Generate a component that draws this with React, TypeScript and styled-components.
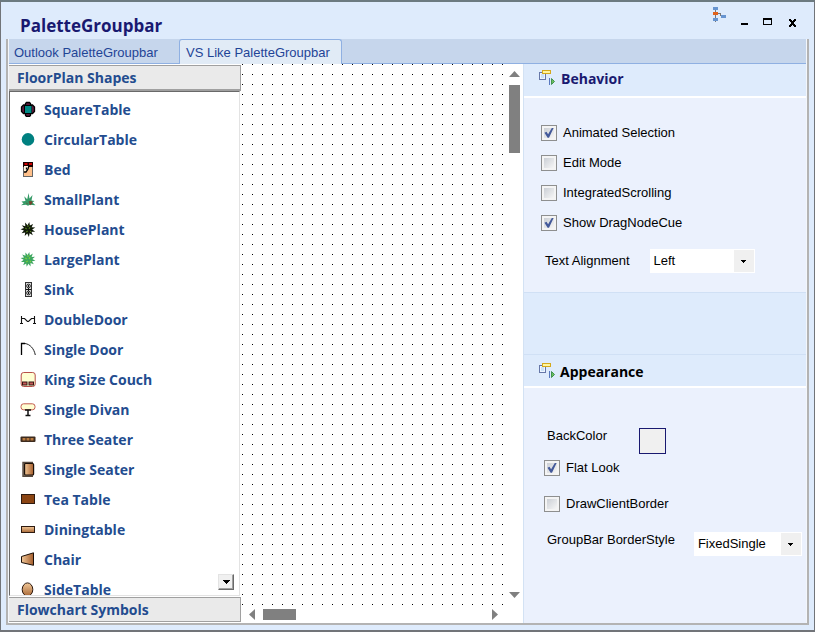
import React, { useState } from "react";
import styled, { createGlobalStyle } from "styled-components";

const GlobalStyle = createGlobalStyle`
  * { box-sizing: border-box; }
  body { margin: 0; background: #deebfc; }
  button, select, input { font: inherit; }
`;

const ui = '"Liberation Sans", Arial, sans-serif';
const heading = '"Open Sans", "Noto Sans", sans-serif';

const Window = styled.div`
  display: flex;
  flex-direction: column;
  height: 100vh;
  min-height: 400px;
  padding: 0 5px 5px 5px;
  background: #deebfc;
  border: 1px solid #717479;
  border-top: 2px solid #6c7a80;
  border-bottom-width: 2px;
  font: 13px/16px ${ui};
  color: #000;
`;

const TitleBar = styled.header`
  display: flex;
  align-items: flex-start;
  height: 37px;
  flex: none;
  padding: 0 11px 0 14px;
`;

const Title = styled.h1`
  flex: 1;
  margin: 0;
  padding-top: 12px;
  font: 700 17px/24px ${heading};
  color: #191970;
`;

const WindowButtons = styled.div`
  display: flex;
  gap: 8px;
  padding-top: 4px;
`;

const WindowButton = styled.button`
  width: 16px;
  height: 28px;
  padding: 0;
  border: 0;
  background: none;
  svg { display: block; }
`;

const Frame = styled.div`
  display: flex;
  flex-direction: column;
  flex: 1;
  min-height: 0;
  border: 2px solid #b3b3b3;
  border-top: 0;
  padding: 0 1px;
  background: #f3f6fb;
`;

const TabStrip = styled.div`
  display: flex;
  height: 25px;
  flex: none;
  background: #c6d6ec;
  box-shadow: inset 0 -1px #8fb0e2;
`;

const Tab = styled.button<{ $active?: boolean }>`
  padding: 2px 6px 0;
  width: ${(p) => (p.$active ? "163px" : "170px")};
  text-align: left;
  white-space: nowrap;
  color: #1f4496;
  background: ${(p) => (p.$active ? "#e1ebf6" : "transparent")};
  border: 1px solid ${(p) => (p.$active ? "#8fb0e2" : "transparent")};
  border-bottom: 0;
  border-radius: 3px 3px 0 0;
  padding-left: ${(p) => (p.$active ? "6px" : "4px")};
`;

const Content = styled.main`
  display: grid;
  grid-template-columns: 232px minmax(0, 1fr) 283px;
  flex: 1;
  min-height: 0;
`;

const GroupBar = styled.section`
  display: flex;
  flex-direction: column;
  min-height: 0;
  padding: 1px 0;
  background: #fff;
`;

const GroupHeader = styled.button<{ $open?: boolean }>`
  flex: none;
  height: ${(p) => (p.$open ? "26px" : "25px")};
  padding: 0 8px;
  text-align: left;
  font: 700 14px/22px ${heading};
  color: #234c8f;
  background: #eaeaea;
  border: 1px solid #a0a0a0;
  border-left: 0;
  border-bottom-width: ${(p) => (p.$open ? "2px" : "1px")};
`;

const ListArea = styled.div`
  display: grid;
  flex: 1;
  min-height: 0;
  margin: 0 1px 1px 0;
  overflow: hidden;
  border: 1px solid #e3e3e3;
  border-left-color: #696969;
  border-top-color: #696969;
  > * { grid-area: 1 / 1; }
`;

const ShapeList = styled.ul`
  margin: 0;
  padding: 2px 0 0;
  height: 0;
  list-style: none;
`;

const ShapeItem = styled.li`
  display: flex;
  align-items: flex-start;
  gap: 8px;
  height: 30px;
  padding: 7px 0 0 10px;
  font: 700 14px/18px ${heading};
  color: #234c8f;
  svg { flex: none; }
`;

const ShapeName = styled.span`
  padding-top: 0;
`;

const ScrollDown = styled.button`
  place-self: end;
  display: grid;
  place-items: center;
  width: 16px;
  height: 16px;
  margin: 0 5px 5px 0;
  padding: 0;
  background: #f0f0f0;
  border: 1px solid #e3e3e3;
  border-right: 1px solid #696969;
  border-bottom: 1px solid #696969;
  box-shadow: inset -1px -1px #a0a0a0;
`;

const Canvas = styled.section`
  display: grid;
  grid-template-columns: minmax(0, 1fr) 20px;
  grid-template-rows: minmax(0, 1fr) 17px;
  min-height: 0;
  background: #fff;
`;

const DotGrid = styled.div`
  margin-left: 1px;
  background-image:
    linear-gradient(to right, transparent 1px, #fff 1px),
    linear-gradient(to bottom, #000 1px, #fff 1px);
  background-size: 10px 10px;
`;

const ScrollBar = styled.div<{ $vertical?: boolean }>`
  display: flex;
  flex-direction: ${(p) => (p.$vertical ? "column" : "row")};
  align-items: flex-start;
  justify-content: space-between;
  gap: 8px;
  padding: ${(p) => (p.$vertical ? "7px 0 8px 6px" : "3px 5px 3px 8px")};
`;

const Thumb = styled.div<{ $vertical?: boolean }>`
  width: ${(p) => (p.$vertical ? "11px" : "33px")};
  height: ${(p) => (p.$vertical ? "68px" : "11px")};
  margin: ${(p) => (p.$vertical ? "0 0 auto" : "0 auto 0 0")};
  background: #808080;
`;

const ArrowButton = styled.button`
  padding: 0;
  border: 0;
  background: none;
  line-height: 0;
  svg { display: block; }
`;

const Properties = styled.aside`
  display: flex;
  flex-direction: column;
  min-height: 0;
  background: #ebf1fd;
  border-left: 1px solid #d3e2f4;
`;

const PanelHeader = styled.div<{ $follow?: boolean }>`
  display: flex;
  align-items: flex-start;
  gap: ${(p) => (p.$follow ? "5px" : "6px")};
  height: 34px;
  flex: none;
  padding: ${(p) => (p.$follow ? "7px" : "5px")} 0 0 14px;
  background: #deebfc;
  border-bottom: 2px solid #fff;
  ${(p) => p.$follow && "border-top: 1px solid #d0e0f5;"}
`;

const PanelTitle = styled.h2<{ $dark?: boolean }>`
  margin: 0;
  font: 700 14px/20px ${heading};
  color: ${(p) => (p.$dark ? "#000" : "#191970")};
`;

const PanelBody = styled.div<{ $first?: boolean }>`
  display: flex;
  flex-direction: column;
  flex: none;
  padding: ${(p) => (p.$first ? "20px 0 19px 17px" : "40px 4px 0 20px")};
`;

const Spacer = styled.div`
  height: 62px;
  flex: none;
  background: #deebfc;
  border-top: 1px solid #d0e0f5;
`;

const CheckLabel = styled.label<{ $height: number }>`
  display: flex;
  align-items: center;
  gap: 6px;
  height: ${(p) => p.$height}px;
`;

const CheckBox = styled.input`
  appearance: none;
  width: 16px;
  height: 16px;
  margin: 0;
  border: 1px solid #8e8f8f;
  background: linear-gradient(135deg, #cbcfd5, #f6f6f6) content-box, #f4f4f4;
  padding: 2px;
`;

const CheckWrap = styled.span`
  display: grid;
  > * { grid-area: 1 / 1; }
  svg { pointer-events: none; }
`;

const Field = styled.div`
  display: flex;
  align-items: flex-start;
`;

const FieldLabel = styled.label<{ $inset?: number }>`
  padding-top: ${(p) => p.$inset ?? 0}px;
  white-space: nowrap;
`;

const ColorButton = styled.button`
  width: 27px;
  height: 26px;
  background: #f0f0f0;
  border: 1px solid #191970;
`;

const SelectWrap = styled.span<{ $width: number }>`
  display: grid;
  width: ${(p) => p.$width}px;
  height: 24px;
  background: #fff;
  > * { grid-area: 1 / 1; }
`;

const SelectBox = styled.select`
  appearance: none;
  width: 100%;
  padding: 0 20px 0 4px;
  border: 0;
  border-radius: 0;
  background: transparent;
  color: #000;
`;

const SelectArrow = styled.span`
  justify-self: end;
  display: grid;
  place-items: center;
  width: 20px;
  margin: 1px;
  background: #f0f0f0;
  pointer-events: none;
`;

const BehaviorField = styled(Field)`
  gap: 20px;
  margin: 11px 0 0 4px;
`;

const ColorField = styled(Field)`
  gap: 32px;
  height: 30px;
  padding-left: 3px;
`;

const BorderField = styled(Field)`
  gap: 19px;
  padding-left: 3px;
  margin-top: 18px;
`;

const Checks = styled.div`
  display: flex;
  flex-direction: column;
  gap: 16px;
`;

const Defs = styled.svg`
  position: absolute;
  width: 0;
  height: 0;
`;

const starPoints = (n: number, r1: number, r2: number) =>
  Array.from({ length: n * 2 }, (_, i) => {
    const a = (i * Math.PI) / n - 1.4;
    const r = i % 2 ? r2 : r1;
    return `${(8 + r * Math.cos(a)).toFixed(1)},${(8.4 + r * Math.sin(a)).toFixed(1)}`;
  }).join(" ");

const shapes: { name: string; art: React.ReactNode }[] = [
  {
    name: "SquareTable",
    art: (
      <>
        <path d="M5.500 4V2.500l1-1h3l1 1V4h2l2 2v4.500l-2 2h-2v2l-1 1h-3l-1-1v-2h-2l-2-2V6l2-2z" fill="#5c1a3c" stroke="#000" strokeWidth="1.300" />
        <path d="M4 4h8v9H4z" />
        <path d="M5 5h6.500v7H5z" fill="#008a86" />
      </>
    ),
  },
  { name: "CircularTable", art: <circle cx="8" cy="8.400" r="6.300" fill="#008080" /> },
  {
    name: "Bed",
    art: (
      <>
        <rect x="3.500" y="1.500" width="9" height="14" fill="#ffc08a" stroke="#666" />
        <path d="M3 1h10v5H3z" fill="#1a0000" />
        <path d="M4.500 2h3v2h-3zM9 2h3v2H9z" fill="#d00000" />
        <path d="M4 5h4v4l-3 2H4z" fill="#fff0dc" />
        <path d="M4 11h2l2-3 1-3.500M6.500 6.500v2" fill="none" stroke="#000" strokeWidth="1.300" />
      </>
    ),
  },
  {
    name: "SmallPlant",
    art: (
      <>
        <path d="M1 14.200l2.500-1.700L1.500 10.500l4-.6L4.200 5.200l3 3L8.600 2l.9 5.500 3-3.500-1 5.500 3 .4-2 1.600 3 2.700-5.500-.4-2 1-2-1.100z" fill="#359a67" />
        <path d="M9 10.500h3v2l-2 1.500zM6 12l2 1" fill="#71452d" stroke="#71452d" strokeWidth=".6" />
      </>
    ),
  },
  {
    name: "HousePlant",
    art: (
      <>
        <polygon points={starPoints(11, 7.5, 4.2)} fill="#101a08" />
        <path d="M5 7l2 1M10 6l-1 2M6 11l2-1M10 10l1 1M8 4v2" stroke="#5b8a1e" strokeWidth=".9" />
      </>
    ),
  },
  {
    name: "LargePlant",
    art: (
      <>
        <polygon points={starPoints(12, 7.5, 4.4)} fill="#3da660" />
        <path d="M5 7l2 1M10 6l-1 2M6 11l2-1M10 10l1 1M8 4v2" stroke="#7cce3c" strokeWidth="1.100" />
      </>
    ),
  },
  {
    name: "Sink",
    art: (
      <>
        <rect x="5.500" y="1.500" width="6" height="14" fill="#d8d8d8" stroke="#333" />
        <circle cx="8.500" cy="5" r="1.800" fill="#fff" stroke="#222" />
        <circle cx="8.500" cy="12" r="1.800" fill="#fff" stroke="#222" />
        <path d="M6 8.500h5M8.500 4v2M8.500 7v3M8.500 11v2" stroke="#111" />
      </>
    ),
  },
  {
    name: "DoubleDoor",
    art: <path d="M1.500 5v7M14.500 5v7M0 12.500h3M13 12.500h3M2 7.500h2.500l3 3h1l3-3H14" fill="none" stroke="#111" strokeWidth="1.100" />,
  },
  {
    name: "Single Door",
    art: (
      <>
        <path d="M1.500 14V2.500H5" fill="none" stroke="#000" strokeWidth="1.300" />
        <path d="M5 2.500c5 .7 9 5 10.300 11.500" fill="none" stroke="#222" />
      </>
    ),
  },
  {
    name: "King Size Couch",
    art: (
      <>
        <rect x="1.200" y="1.500" width="14" height="14" rx="2.500" fill="#ffffd2" stroke="#b74f49" />
        <path d="M2 10.500h5.500v4H2zM8.500 10.500H14v4H8.500z" fill="#321512" />
        <path d="M3 11.500h3.500v2H3zM9.500 11.500H13v2H9.500z" fill="#c65b59" />
      </>
    ),
  },
  {
    name: "Single Divan",
    art: (
      <>
        <rect x="1" y="2.800" width="14" height="6" rx="2.600" fill="#ffffd2" stroke="#c25c50" />
        <path d="M5 9h6M8 9v5.500M5.500 14.500h5" stroke="#111" strokeWidth="1.500" />
      </>
    ),
  },
  {
    name: "Three Seater",
    art: (
      <>
        <rect x=".5" y="5.500" width="15" height="5.500" rx="1" fill="#3d2b1e" />
        <path d="M2.500 7h3v2.500h-3zM6.500 7h3v2.500h-3zM10.500 7h3v2.500h-3z" fill="#b97a3e" />
      </>
    ),
  },
  {
    name: "Single Seater",
    art: (
      <>
        <path d="M13 1.500H3v14h10" fill="#8f8072" stroke="#55493f" strokeWidth="1.400" />
        <rect x="4.600" y="2.500" width="9" height="11.500" rx="1" fill="url(#wood-h)" stroke="#1a0f08" strokeWidth="1.200" />
      </>
    ),
  },
  { name: "Tea Table", art: <rect x="1.500" y="3.500" width="13" height="9" fill="#8b4513" stroke="#2d1a10" /> },
  { name: "Diningtable", art: <rect x="1.500" y="5.500" width="13" height="6" fill="url(#wood-v)" stroke="#2d1a10" /> },
  { name: "Chair", art: <path d="M1.500 5.500L13.500 1.800v12.500L1.500 11.500z" fill="url(#wood-h)" stroke="#1a0f08" /> },
  { name: "SideTable", art: <ellipse cx="7.500" cy="8.500" rx="5.300" ry="6.600" fill="url(#wood-v)" stroke="#2d1a10" /> },
];

function Gradients() {
  return (
    <Defs aria-hidden="true">
      <linearGradient id="wood-h">
        <stop offset="0" stopColor="#f3c999" />
        <stop offset="1" stopColor="#a35c2b" />
      </linearGradient>
      <linearGradient id="wood-v" x2="0" y2="1">
        <stop offset="0" stopColor="#f3c999" />
        <stop offset="1" stopColor="#a86837" />
      </linearGradient>
    </Defs>
  );
}

function Arrow({ dir }: { dir: "up" | "down" | "left" | "right" }) {
  const vertical = dir === "up" || dir === "down";
  const d = { up: "M0 6L5.500 0 11 6z", down: "M0 0h11L5.500 6z", left: "M6 0v11L0 5.500z", right: "M0 0v11l6-5.500z" }[dir];
  return (
    <ArrowButton aria-label={`Scroll ${dir}`}>
      <svg width={vertical ? 11 : 6} height={vertical ? 6 : 11}>
        <path d={d} fill="#808080" />
      </svg>
    </ArrowButton>
  );
}

function PanelIcon() {
  return (
    <svg width="17" height="17" aria-hidden="true">
      <rect x="1.500" y="3.500" width="6" height="7" fill="#eef6ff" stroke="#6677a8" />
      <path d="M3 6h3M3 8h3" stroke="#a8cdf3" />
      <rect x="4.500" y="1.500" width="8" height="3" fill="#fff6a0" stroke="#d5a91c" />
      <path d="M11.500 9v7" stroke="#5878c0" />
      <path d="M13.500 9.500v6l3-3z" fill="#6cc05c" stroke="#27803a" strokeWidth=".8" />
    </svg>
  );
}

function Check({ label, height, initial = false }: { label: string; height: number; initial?: boolean }) {
  const [on, setOn] = useState(initial);
  return (
    <CheckLabel $height={height}>
      <CheckWrap>
        <CheckBox type="checkbox" checked={on} onChange={() => setOn(!on)} />
        {on && (
          <svg width="16" height="16" aria-hidden="true">
            <path d="M3.500 7.800l2-1 1.600 2.400L10.800 3h1.800L8 12.800H6.600z" fill="#43599a" />
          </svg>
        )}
      </CheckWrap>
      {label}
    </CheckLabel>
  );
}

function DropDown({ id, width, options }: { id: string; width: number; options: string[] }) {
  return (
    <SelectWrap $width={width}>
      <SelectBox id={id}>
        {options.map((o) => (
          <option key={o}>{o}</option>
        ))}
      </SelectBox>
      <SelectArrow>
        <svg width="5" height="3" shapeRendering="crispEdges">
          <path d="M0 0h5v1H0zM1 1h3v1H1zM2 2h1v1H2z" />
        </svg>
      </SelectArrow>
    </SelectWrap>
  );
}

export default function App() {
  return (
    <Window>
      <GlobalStyle />
      <Gradients />
      <TitleBar>
        <Title>PaletteGroupbar</Title>
        <WindowButtons>
          <WindowButton aria-label="Structure">
            <svg width="16" height="28" shapeRendering="crispEdges">
              <path d="M5 3h1v13H5zM6 7h5v1H6zM10 7h1v3h-1z" fill="#777" />
              <path d="M3 1h5v3H3zM3 12h5v3H3zM11 9h5v3h-5z" fill="#6794d0" />
              <path d="M3 6h5v3H3z" fill="#e2621b" />
            </svg>
          </WindowButton>
          <WindowButton aria-label="Minimize">
            <svg width="16" height="28" shapeRendering="crispEdges">
              <path d="M7 17h7v2H7z" />
            </svg>
          </WindowButton>
          <WindowButton aria-label="Maximize">
            <svg width="16" height="28" shapeRendering="crispEdges">
              <path d="M5 12h9v7H5zM6 14v4h7v-4z" fillRule="evenodd" />
            </svg>
          </WindowButton>
          <WindowButton aria-label="Close">
            <svg width="16" height="28" shapeRendering="crispEdges">
              <path d="M7 13h2v1h1v1h1v-1h1v-1h2v2h-1v1h-1v2h1v1h1v2h-2v-1h-1v-1h-1v1H9v1H7v-2h1v-1h1v-2H8v-1H7z" />
            </svg>
          </WindowButton>
        </WindowButtons>
      </TitleBar>
      <Frame>
        <TabStrip role="tablist">
          <Tab role="tab" aria-selected="false">Outlook PaletteGroupbar</Tab>
          <Tab role="tab" aria-selected="true" $active>VS Like PaletteGroupbar</Tab>
        </TabStrip>
        <Content>
          <GroupBar>
            <GroupHeader $open>FloorPlan Shapes</GroupHeader>
            <ListArea>
              <ShapeList>
                {shapes.map((s) => (
                  <ShapeItem key={s.name}>
                    <svg width="16" height="16" aria-hidden="true">{s.art}</svg>
                    <ShapeName>{s.name}</ShapeName>
                  </ShapeItem>
                ))}
              </ShapeList>
              <ScrollDown aria-label="Scroll list down">
                <svg width="7" height="4" shapeRendering="crispEdges">
                  <path d="M0 0h7v1H0zM1 1h5v1H1zM2 2h3v1H2zM3 3h1v1H3z" />
                </svg>
              </ScrollDown>
            </ListArea>
            <GroupHeader>Flowchart Symbols</GroupHeader>
          </GroupBar>
          <Canvas>
            <DotGrid />
            <ScrollBar $vertical>
              <Arrow dir="up" />
              <Thumb $vertical />
              <Arrow dir="down" />
            </ScrollBar>
            <ScrollBar>
              <Arrow dir="left" />
              <Thumb />
              <Arrow dir="right" />
            </ScrollBar>
          </Canvas>
          <Properties>
            <PanelHeader>
              <PanelIcon />
              <PanelTitle>Behavior</PanelTitle>
            </PanelHeader>
            <PanelBody $first>
              <Check label="Animated Selection" height={30} initial />
              <Check label="Edit Mode" height={30} />
              <Check label="IntegratedScrolling" height={30} />
              <Check label="Show DragNodeCue" height={30} initial />
              <BehaviorField>
                <FieldLabel htmlFor="align" $inset={4}>Text Alignment</FieldLabel>
                <DropDown id="align" width={105} options={["Left", "Center", "Right"]} />
              </BehaviorField>
            </PanelBody>
            <Spacer />
            <PanelHeader $follow>
              <PanelIcon />
              <PanelTitle $dark>Appearance</PanelTitle>
            </PanelHeader>
            <PanelBody>
              <ColorField>
                <FieldLabel htmlFor="back">BackColor</FieldLabel>
                <ColorButton id="back" />
              </ColorField>
              <Checks>
                <Check label="Flat Look" height={20} initial />
                <Check label="DrawClientBorder" height={20} />
              </Checks>
              <BorderField>
                <FieldLabel htmlFor="border">GroupBar BorderStyle</FieldLabel>
                <DropDown id="border" width={108} options={["FixedSingle", "Fixed3D", "None"]} />
              </BorderField>
            </PanelBody>
          </Properties>
        </Content>
      </Frame>
    </Window>
  );
}
